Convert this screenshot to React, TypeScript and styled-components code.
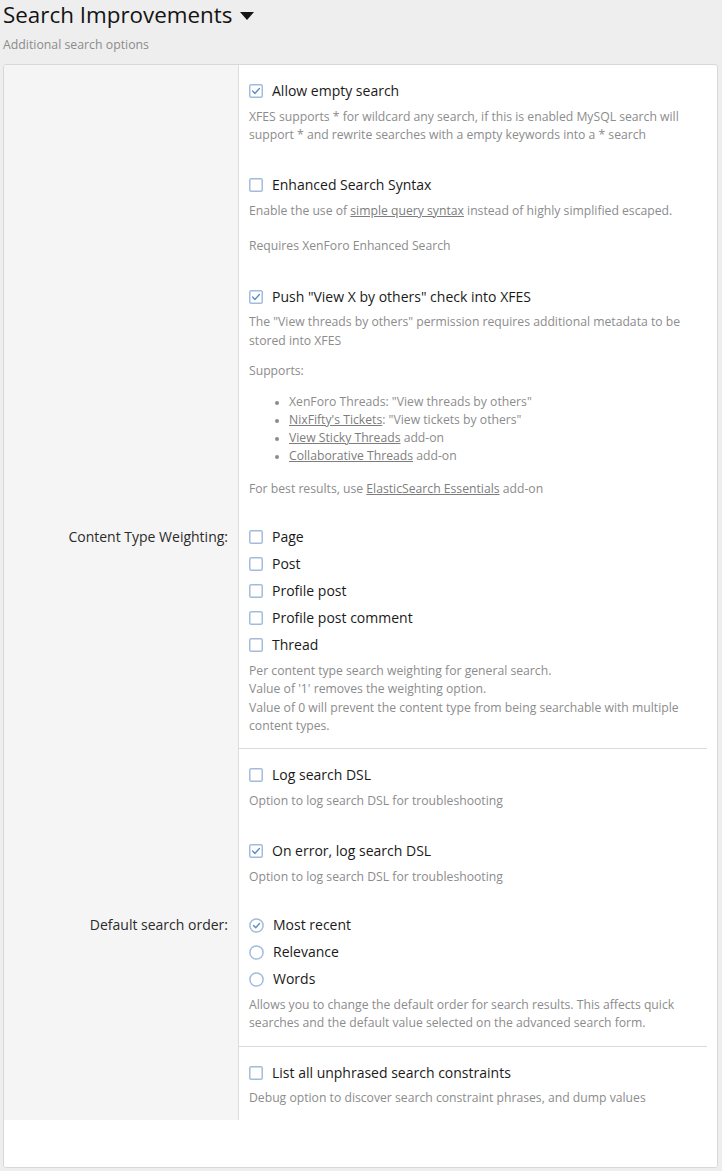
import React from 'react';
import styled, { createGlobalStyle } from 'styled-components';

const GlobalStyle = createGlobalStyle`
  html, body {
    margin: 0;
    padding: 0;
    background: #eeeeee;
  }

  body {
    font-family: 'Open Sans', 'Noto Sans', sans-serif;
    color: #141414;
  }
`;

const Page = styled.div`
  width: 722px;
  box-sizing: border-box;
  padding: 0 4px 4px 3px;
`;

const Title = styled.h1`
  margin: 0;
  font-size: 22.4px;
  font-weight: 400;
  line-height: 30px;
  color: #141414;
  display: flex;
  align-items: center;
  gap: 8px;
`;

const Caret = styled.span`
  width: 0;
  height: 0;
  border-left: 7px solid transparent;
  border-right: 7px solid transparent;
  border-top: 8px solid #141414;
  margin-top: 2px;
`;

const Subtitle = styled.div`
  margin-top: 6px;
  font-size: 12.3px;
  line-height: 18px;
  color: #8c8c8c;
`;

const Panel = styled.div`
  margin-top: 10px;
  background: #fff;
  border: 1px solid #d8d8d8;
  border-radius: 3px;
  overflow: hidden;
`;

const Row = styled.dl<{ $separated?: boolean }>`
  margin: 0;
  display: grid;
  grid-template-columns: 235px 1fr;

  dd {
    border-top: ${p => (p.$separated ? '1px solid #dadada' : '0')};
  }
`;

const RowLabel = styled.dt`
  box-sizing: border-box;
  background: #f5f5f5;
  border-right: 1px solid #dcdcdc;
  padding: 16px 10px 0 10px;
  text-align: right;
  font-size: 14px;
  line-height: 20px;
  color: #2b2b2b;
`;

const RowBody = styled.dd`
  margin: 0 10px 0 0;
  padding: 10px 10px 13px 10px;
`;

const Block = styled.div`
  & + & {
    margin-top: 25px;
  }
`;

const Choices = styled.div`
  display: flex;
  flex-direction: column;
  gap: 1px;
`;

const Choice = styled.label`
  display: flex;
  align-items: center;
  gap: 9px;
  padding-top: 6px;
  font-size: 14px;
  line-height: 20px;
  color: #1a1a1a;
`;

const Hint = styled.div`
  margin-top: 6.5px;
  font-size: 12.2px;
  line-height: 18.4px;
  color: #8c8c8c;
`;

const Para = styled.p<{ $gap?: number }>`
  margin: ${p => p.$gap ?? 12}px 0 0;

  &:first-child {
    margin-top: 0;
  }
`;

const BulletList = styled.ul`
  margin: 12.5px 0 15px;
  padding-left: 40px;

  li {
    line-height: 18px;
  }

  li::marker {
    font-size: 10px;
  }
`;

const Link = styled.a`
  color: #7d7d7d;
  text-decoration: underline;
`;

const Footer = styled.div`
  height: 47px;
  background: #fff;
`;

const Box = ({ checked }: { checked?: boolean }) => (
  <svg width="14" height="14" viewBox="0 0 14 14">
    <rect x="0.75" y="0.75" width="12.5" height="12.5" rx="1.5" fill="none" stroke="#a3bcdb" strokeWidth="1.5" />
    {checked && (
      <path d="M3.6 7.1 L5.9 9.4 L10.4 4.6" fill="none" stroke="#5f8ec5" strokeWidth="1.4" strokeLinecap="round" strokeLinejoin="round" />
    )}
  </svg>
);

const Radio = ({ checked }: { checked?: boolean }) => (
  <svg width="15" height="15" viewBox="0 0 15 15">
    <circle cx="7.5" cy="7.5" r="6.6" fill="none" stroke="#a3bcdb" strokeWidth="1.5" />
    {checked && (
      <path d="M4.6 7.6 L6.7 9.7 L10.5 5.6" fill="none" stroke="#5f8ec5" strokeWidth="1.4" strokeLinecap="round" strokeLinejoin="round" />
    )}
  </svg>
);

const contentTypes = ['Page', 'Post', 'Profile post', 'Profile post comment', 'Thread'];
const orders = [
  { label: 'Most recent', checked: true },
  { label: 'Relevance', checked: false },
  { label: 'Words', checked: false },
];

export default function App() {
  return (
    <>
      <GlobalStyle />
      <Page>
        <Title>
          Search Improvements
          <Caret />
        </Title>
        <Subtitle>Additional search options</Subtitle>

        <Panel>
          <Row>
            <RowLabel />
            <RowBody>
              <Block>
                <Choice>
                  <Box checked />
                  Allow empty search
                </Choice>
                <Hint>
                  XFES supports * for wildcard any search, if this is enabled MySQL search will support * and rewrite
                  searches with a empty keywords into a * search
                </Hint>
              </Block>
              <Block>
                <Choice>
                  <Box />
                  Enhanced Search Syntax
                </Choice>
                <Hint>
                  <Para>
                    Enable the use of <Link>simple query syntax</Link> instead of highly simplified escaped.
                  </Para>
                  <Para $gap={17}>Requires XenForo Enhanced Search</Para>
                </Hint>
              </Block>
              <Block>
                <Choice>
                  <Box checked />
                  Push "View X by others" check into XFES
                </Choice>
                <Hint>
                  <Para>The "View threads by others" permission requires additional metadata to be stored into XFES</Para>
                  <Para>Supports:</Para>
                  <BulletList>
                    <li>XenForo Threads: "View threads by others"</li>
                    <li>
                      <Link>NixFifty's Tickets</Link>: "View tickets by others"
                    </li>
                    <li>
                      <Link>View Sticky Threads</Link> add-on
                    </li>
                    <li>
                      <Link>Collaborative Threads</Link> add-on
                    </li>
                  </BulletList>
                  <Para>
                    For best results, use <Link>ElasticSearch Essentials</Link> add-on
                  </Para>
                </Hint>
              </Block>
            </RowBody>
          </Row>

          <Row>
            <RowLabel>Content Type Weighting:</RowLabel>
            <RowBody>
              <Choices>
                {contentTypes.map(t => (
                  <Choice key={t}>
                    <Box />
                    {t}
                  </Choice>
                ))}
              </Choices>
              <Hint>
                Per content type search weighting for general search.
                <br />
                Value of '1' removes the weighting option.
                <br />
                Value of 0 will prevent the content type from being searchable with multiple content types.
              </Hint>
            </RowBody>
          </Row>

          <Row $separated>
            <RowLabel />
            <RowBody>
              <Block>
                <Choice>
                  <Box />
                  Log search DSL
                </Choice>
                <Hint>Option to log search DSL for troubleshooting</Hint>
              </Block>
              <Block>
                <Choice>
                  <Box checked />
                  On error, log search DSL
                </Choice>
                <Hint>Option to log search DSL for troubleshooting</Hint>
              </Block>
            </RowBody>
          </Row>

          <Row>
            <RowLabel>Default search order:</RowLabel>
            <RowBody>
              <Choices>
                {orders.map(o => (
                  <Choice key={o.label}>
                    <Radio checked={o.checked} />
                    {o.label}
                  </Choice>
                ))}
              </Choices>
              <Hint>
                Allows you to change the default order for search results. This affects quick searches and the default
                value selected on the advanced search form.
              </Hint>
            </RowBody>
          </Row>

          <Row $separated>
            <RowLabel />
            <RowBody>
              <Block>
                <Choice>
                  <Box />
                  List all unphrased search constraints
                </Choice>
                <Hint>Debug option to discover search constraint phrases, and dump values</Hint>
              </Block>
            </RowBody>
          </Row>

          <Footer />
        </Panel>
      </Page>
    </>
  );
}
